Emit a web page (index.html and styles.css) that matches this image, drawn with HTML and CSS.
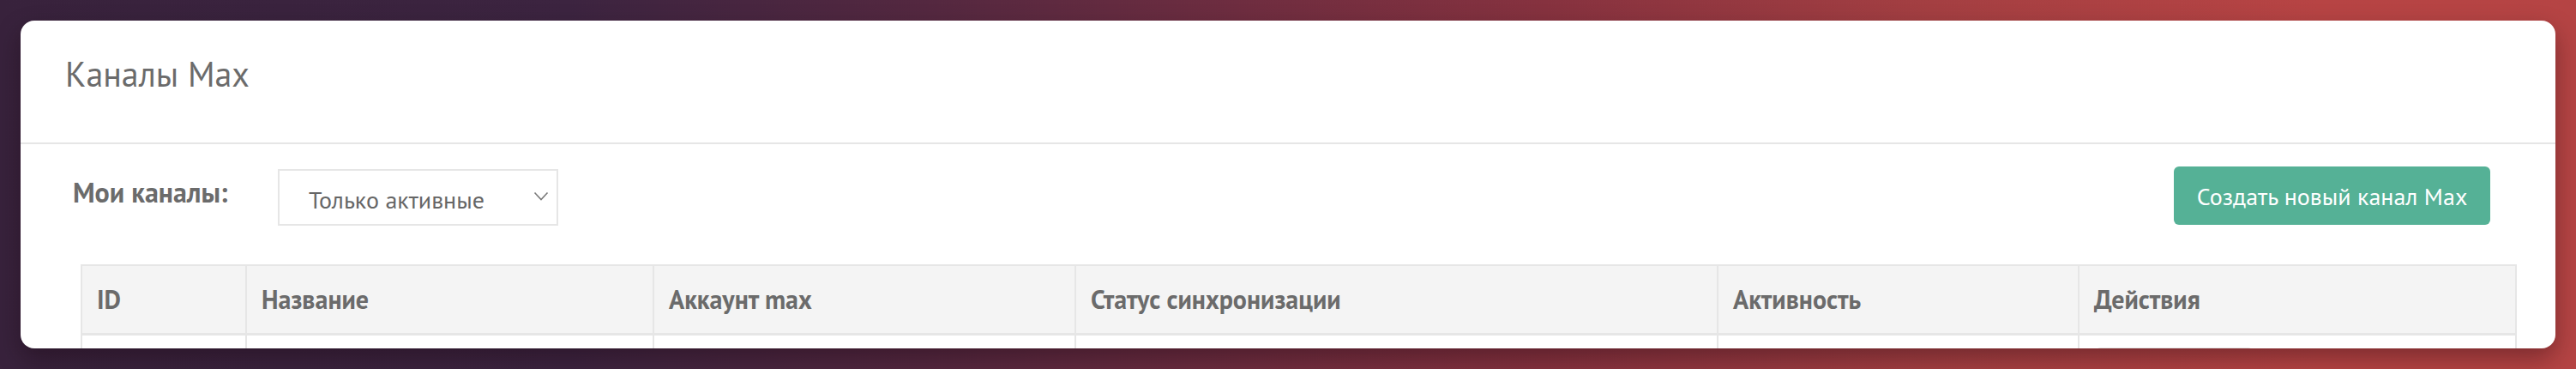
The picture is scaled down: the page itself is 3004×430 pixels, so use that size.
FILE: index.html
```html
<!DOCTYPE html>
<html lang="ru">
<head>
<meta charset="utf-8">
<title>Каналы Max</title>
<link rel="stylesheet" href="styles.css">
</head>
<body>
<div class="page">
  <section class="card">
    <header class="card-header">
      <h1 class="card-title">Каналы Max</h1>
    </header>
    <div class="card-body">
      <div class="toolbar">
        <label class="filter-label">Мои каналы:</label>
        <div class="select">
          <span class="select-value">Только активные</span>
          <svg class="select-chevron" width="18" height="12" viewBox="0 0 18 12"><polyline points="1.5,1.5 9,9.5 16.5,1.5" fill="none" stroke="#7a7a7a" stroke-width="1.6"/></svg>
        </div>
        <div class="toolbar-spacer"></div>
        <button class="btn-create">Создать новый канал Max</button>
      </div>
      <table class="channels">
        <colgroup>
          <col class="c-id"><col class="c-name"><col class="c-acc"><col class="c-sync"><col class="c-act"><col class="c-do">
        </colgroup>
        <thead>
          <tr>
            <th>ID</th>
            <th>Название</th>
            <th>Аккаунт max</th>
            <th>Статус синхронизации</th>
            <th>Активность</th>
            <th>Действия</th>
          </tr>
        </thead>
        <tbody>
          <tr>
            <td></td><td></td><td></td><td></td><td></td>
            <td><span class="row-btn"></span></td>
          </tr>
        </tbody>
      </table>
    </div>
  </section>
</div>
</body>
</html>
```
FILE: styles.css
```css
* { box-sizing: border-box; }
html, body { margin: 0; padding: 0; }
body {
  width: 3004px;
  height: 430px;
  overflow: hidden;
  font-family: "PT Sans", Roboto, "Noto Sans", sans-serif;
  background: linear-gradient(90deg, #38223c 0%, #3c2440 22%, #542840 36%, #6e2d40 48%, #86323f 60%, #a43f42 75%, #b74444 90%, #b54444 100%);
}
.page {
  padding: 24px 24px 0 24px;
}
.card {
  width: 2956px;
  height: 382px;
  background: #fff;
  border-radius: 16px;
  overflow: hidden;
  box-shadow: 0 12px 28px rgba(20, 0, 10, 0.35);
}
.card-header {
  height: 144px;
  border-bottom: 2px solid #e6e6e6;
  padding: 38px 0 0 52px;
}
.card-title {
  margin: 0;
  font-size: 40px;
  line-height: 1.2;
  font-weight: 400;
  color: #6b6b6b;
}
.card-body {
  padding: 0;
}
.toolbar {
  display: flex;
  align-items: flex-start;
  padding: 0 76px 0 61px;
  height: 95px;
}
.filter-label {
  width: 239px;
  margin-top: 37px;
  font-size: 32px;
  line-height: 1.2;
  font-weight: 700;
  color: #6b6b6b;
}
.select {
  margin-top: 29px;
  width: 327px;
  height: 66px;
  border: 2px solid #e6e6e6;
  display: flex;
  align-items: center;
  justify-content: space-between;
  padding: 4px 9px 0 34px;
}
.select-value {
  font-size: 28px;
  color: #666;
  white-space: nowrap;
}
.select-chevron {
  display: block;
  margin-top: -6px;
}
.toolbar-spacer { flex: 1; }
.btn-create {
  margin-top: 26px;
  width: 369px;
  height: 68px;
  border: none;
  border-radius: 6px;
  background: #55b196;
  color: #fff;
  font-family: inherit;
  font-size: 28px;
  padding: 0;
  white-space: nowrap;
}
.channels {
  margin: 45px 0 0 70px;
  width: 2839px;
  table-layout: fixed;
  border-collapse: collapse;
}
.c-id { width: 192px; }
.c-name { width: 475px; }
.c-acc { width: 492px; }
.c-sync { width: 749px; }
.c-act { width: 421px; }
.c-do { width: 510px; }
.channels th,
.channels td {
  border: 2px solid #e6e6e6;
  padding: 0 17px;
  text-align: left;
}
.channels th {
  height: 80px;
  background: #f4f4f4;
  font-size: 30px;
  font-weight: 700;
  color: #6b6b6b;
  white-space: nowrap;
}
.channels thead th { border-bottom-width: 3px; }
.channels td {
  height: 80px;
  vertical-align: top;
  padding-top: 14px;
}
.row-btn {
  display: block;
  width: 187px;
  height: 56px;
  border: 2px solid #e6e6e6;
  border-radius: 8px;
}
```
